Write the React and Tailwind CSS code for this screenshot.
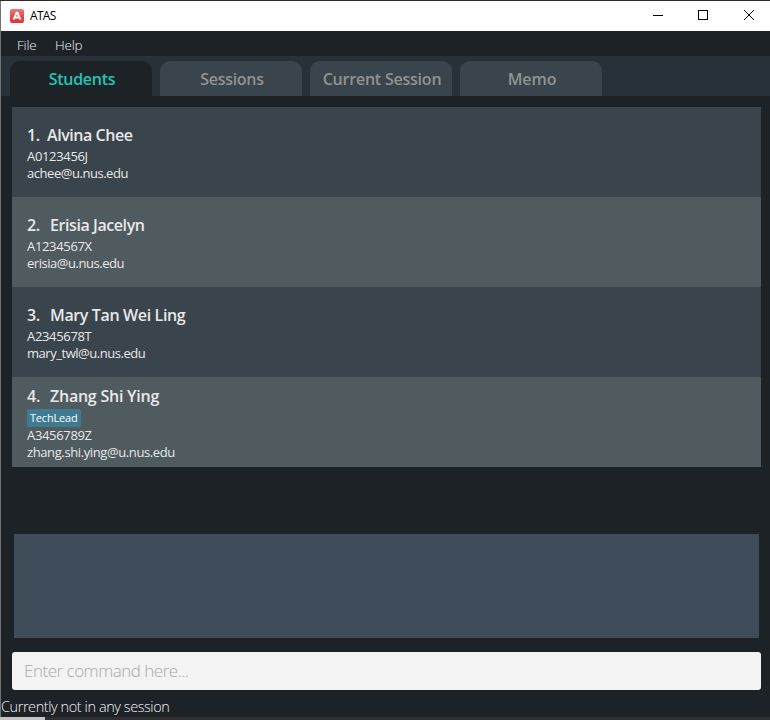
const tabs = [
  { label: 'Students', active: true, spacing: 'tracking-[-0.3px]' },
  { label: 'Sessions', spacing: 'tracking-[-0.3px]' },
  { label: 'Current Session', spacing: 'tracking-[-0.22px]' },
  { label: 'Memo', spacing: 'tracking-[-0.1px]' },
];

const students = [
  { name: 'Alvina Chee', id: 'A0123456J', email: 'achee@u.nus.edu', gap: 'w-5', spacing: 'tracking-[-0.45px]' },
  { name: 'Erisia Jacelyn', id: 'A1234567X', email: 'erisia@u.nus.edu', gap: 'w-[23px]', spacing: 'tracking-[-0.42px]' },
  { name: 'Mary Tan Wei Ling', id: 'A2345678T', email: 'mary_twl@u.nus.edu', gap: 'w-[23px]', spacing: 'tracking-[-0.36px]' },
  { name: 'Zhang Shi Ying', id: 'A3456789Z', email: 'zhang.shi.ying@u.nus.edu', gap: 'w-[23px]', spacing: 'tracking-[-0.24px]', tag: 'TechLead' },
];

function TitleBar() {
  return (
    <header className="flex h-[30px] shrink-0 items-center bg-white pl-[9px] text-black">
      <svg width="14" height="14" viewBox="0 0 14 14" className="shrink-0">
        <defs>
          <linearGradient id="badge" x1="0" y1="0" x2="0" y2="1">
            <stop offset="0" stopColor="#ef7777" />
            <stop offset="0.5" stopColor="#e94848" />
            <stop offset="1" stopColor="#dc3434" />
          </linearGradient>
        </defs>
        <rect width="14" height="14" rx="2" fill="url(#badge)" />
        <path d="M3.6 10.6 6.5 3.8h1l2.9 6.8M5 8.4h4" fill="none" stroke="#fff" strokeWidth="2" />
      </svg>
      <span className="ml-[6px] text-[12px] tracking-[-0.7px]">ATAS</span>
      <div className="-mr-px ml-auto flex">
        <svg width="45" height="30" fill="none" stroke="#000" shapeRendering="crispEdges">
          <path d="M17 14.5h10" />
        </svg>
        <svg width="45" height="30" fill="none" stroke="#000" shapeRendering="crispEdges">
          <rect x="17.5" y="9.5" width="9" height="9" />
        </svg>
        <svg width="45" height="30" fill="none" stroke="#000">
          <path d="m18 9 10 10m0-10L18 19" />
        </svg>
      </div>
    </header>
  );
}

function StudentRow({ student, index }) {
  return (
    <li
      className={`flex h-[90px] flex-col pl-[15px] text-[13px] leading-[17px] text-[#e8e8e8] ${
        index % 2 ? 'bg-[#505b60]' : 'bg-[#3a444c]'
      } ${student.tag ? 'pt-2' : 'pt-[17px]'}`}
    >
      <div className={`flex h-[24px] text-[16px] font-semibold leading-[22px] ${student.spacing}`}>
        <span className={student.gap}>{index + 1}.</span>
        <span>{student.name}</span>
      </div>
      {student.tag && (
        <span className="flex h-[18px] w-[54px] items-center rounded-[2px] bg-[#3e7b91] pb-0.5 pl-[3px] text-[11px] tracking-[-0.2px] text-white">
          {student.tag}
        </span>
      )}
      <span className="tracking-[-0.33px]">{student.id}</span>
      <span className={student.tag ? 'tracking-[-0.39px]' : 'tracking-[-0.46px]'}>{student.email}</span>
    </li>
  );
}

export default function App() {
  return (
    <div className="flex h-[720px] w-[770px] flex-col overflow-hidden border-t border-[#2d2b2c] bg-[#2f2f31] font-['Open_Sans',sans-serif]">
      <div className="flex h-[716px] flex-col border-l border-[#707274] bg-[#1d2226]">
        <TitleBar />
        <nav className="flex h-[25px] shrink-0 items-center gap-[18.5px] pl-4 pt-1 text-[13.5px] font-light tracking-[-0.2px] text-[#f0f0f0]">
          <span>File</span>
          <span>Help</span>
        </nav>
        <div className="flex h-10 shrink-0 items-end gap-2 bg-[#263238] pl-[9px]">
          {tabs.map((tab) => (
            <div
              key={tab.label}
              className={`flex h-[35px] w-[142px] items-center justify-center rounded-t-[10px] whitespace-nowrap pl-0.5 text-[16px] font-semibold ${tab.spacing} ${
                tab.active ? 'bg-[#1d2226] text-[#1fc8b4]' : 'bg-[#3a444c] text-[#929292]'
              }`}
            >
              {tab.label}
            </div>
          ))}
        </div>
        <ul className="ml-[11px] mt-[11px] w-[749px] shrink-0">
          {students.map((student, index) => (
            <StudentRow key={student.id} student={student} index={index} />
          ))}
        </ul>
        <div className="ml-[13px] mt-[67px] h-[104px] w-[745px] shrink-0 bg-[#3f4c59]" />
        <input
          placeholder="Enter command here..."
          className="ml-[11px] mt-[14px] h-[38px] w-[749px] shrink-0 rounded-[3px] bg-[#f3f3f3] px-3 pb-0.5 text-[17px] font-light tracking-[-0.49px] outline-none placeholder:text-[#a9a9a9]"
        />
        <footer className="mt-[7px] h-5 text-[14.5px] font-light leading-5 tracking-[-0.43px] text-[#f0f0f0]">
          Currently not in any session
        </footer>
      </div>
      <div className="h-[3px] w-[45px] bg-[#c4c4c5]" />
    </div>
  );
}
